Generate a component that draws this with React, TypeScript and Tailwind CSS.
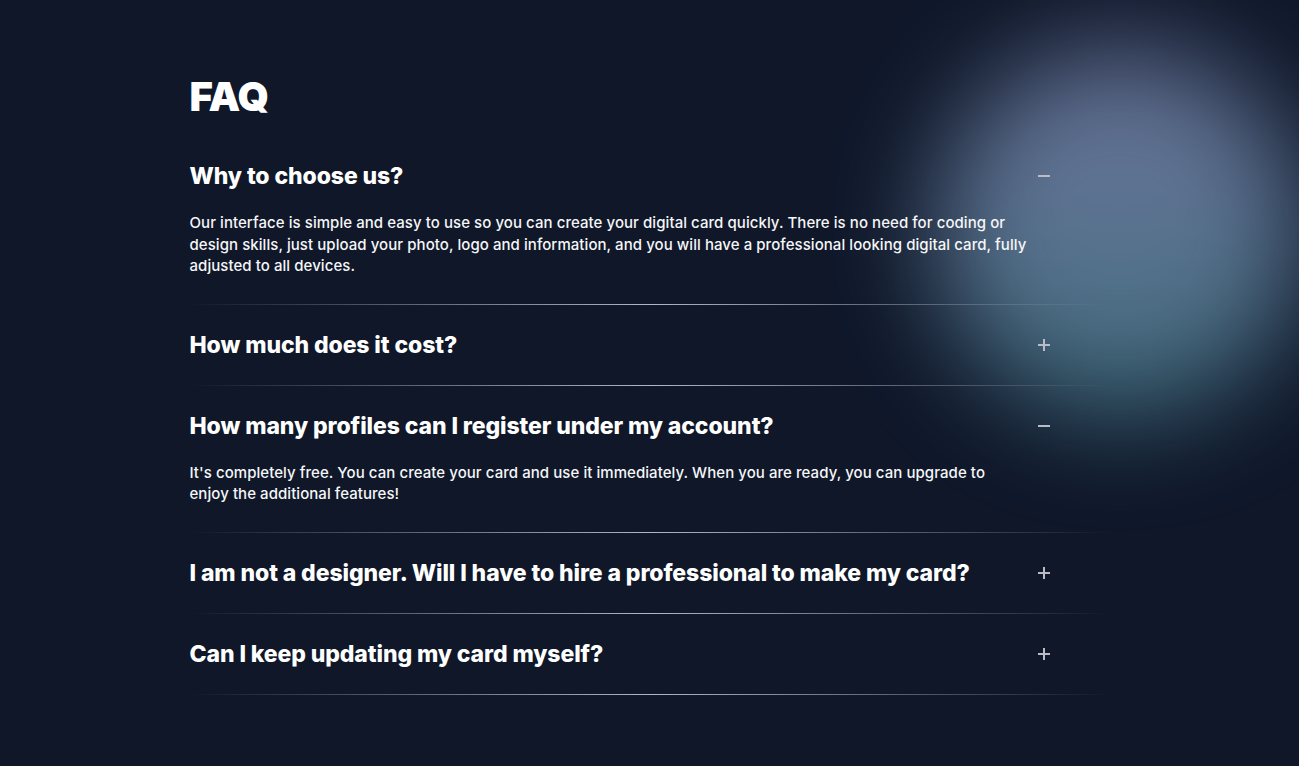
import React from "react";

type Item = { q: string; a?: string; open: boolean };

const items: Item[] = [
  {
    q: "Why to choose us?",
    a: "Our interface is simple and easy to use so you can create your digital card quickly. There is no need for coding or design skills, just upload your photo, logo and information, and you will have a professional looking digital card, fully adjusted to all devices.",
    open: true,
  },
  { q: "How much does it cost?", open: false },
  {
    q: "How many profiles can I register under my account?",
    a: "It's completely free. You can create your card and use it immediately. When you are ready, you can upgrade to enjoy the additional features!",
    open: true,
  },
  { q: "I am not a designer. Will I have to hire a professional to make my card?", open: false },
  { q: "Can I keep updating my card myself?", open: false },
];

function Icon({ open }: { open: boolean }) {
  return (
    <svg width="12" height="12" viewBox="0 0 12 12" className="shrink-0">
      <rect x="0" y="5" width="12" height="2" fill="#b9bcc6" />
      {!open && <rect x="5" y="0" width="2" height="12" fill="#b9bcc6" />}
    </svg>
  );
}

export default function App() {
  return (
    <div className="relative min-h-[766px] w-full overflow-hidden bg-[#0f1729]" style={{ fontFamily: "Inter, 'Noto Sans', sans-serif" }}>
      <div className="pointer-events-none absolute left-[935px] top-[50px] h-[365px] w-[370px] rounded-full bg-linear-to-b from-[#6d789e] via-[#5e7895] to-[#3e6f7e] opacity-95 blur-[55px]" />
      <section className="relative mx-auto w-[920px] pt-[73px] pb-[60px]">
        <h1 className="mb-[15px] text-[40px] font-black leading-[48px] tracking-[-0.02em] text-white">FAQ</h1>
        <div>
          {items.map((it, i) => (
            <div key={i}>
              <div className={it.open ? "pt-7 pb-[27px]" : "py-7"}>
                <div className="flex h-6 items-center justify-between pr-[60px]">
                  <h3 className="text-[23px] font-extrabold leading-6 tracking-[-0.1px] text-white">{it.q}</h3>
                  <Icon open={it.open} />
                </div>
                {it.open && it.a && (
                  <p className="mt-6 w-[837px] text-[15px] font-medium leading-[21.5px] tracking-[0.06px] text-[#f5f6f8]">{it.a}</p>
                )}
              </div>
              <div className="h-px w-full bg-linear-to-r from-transparent via-[#b4b7c2] to-transparent" />
            </div>
          ))}
        </div>
      </section>
    </div>
  );
}
